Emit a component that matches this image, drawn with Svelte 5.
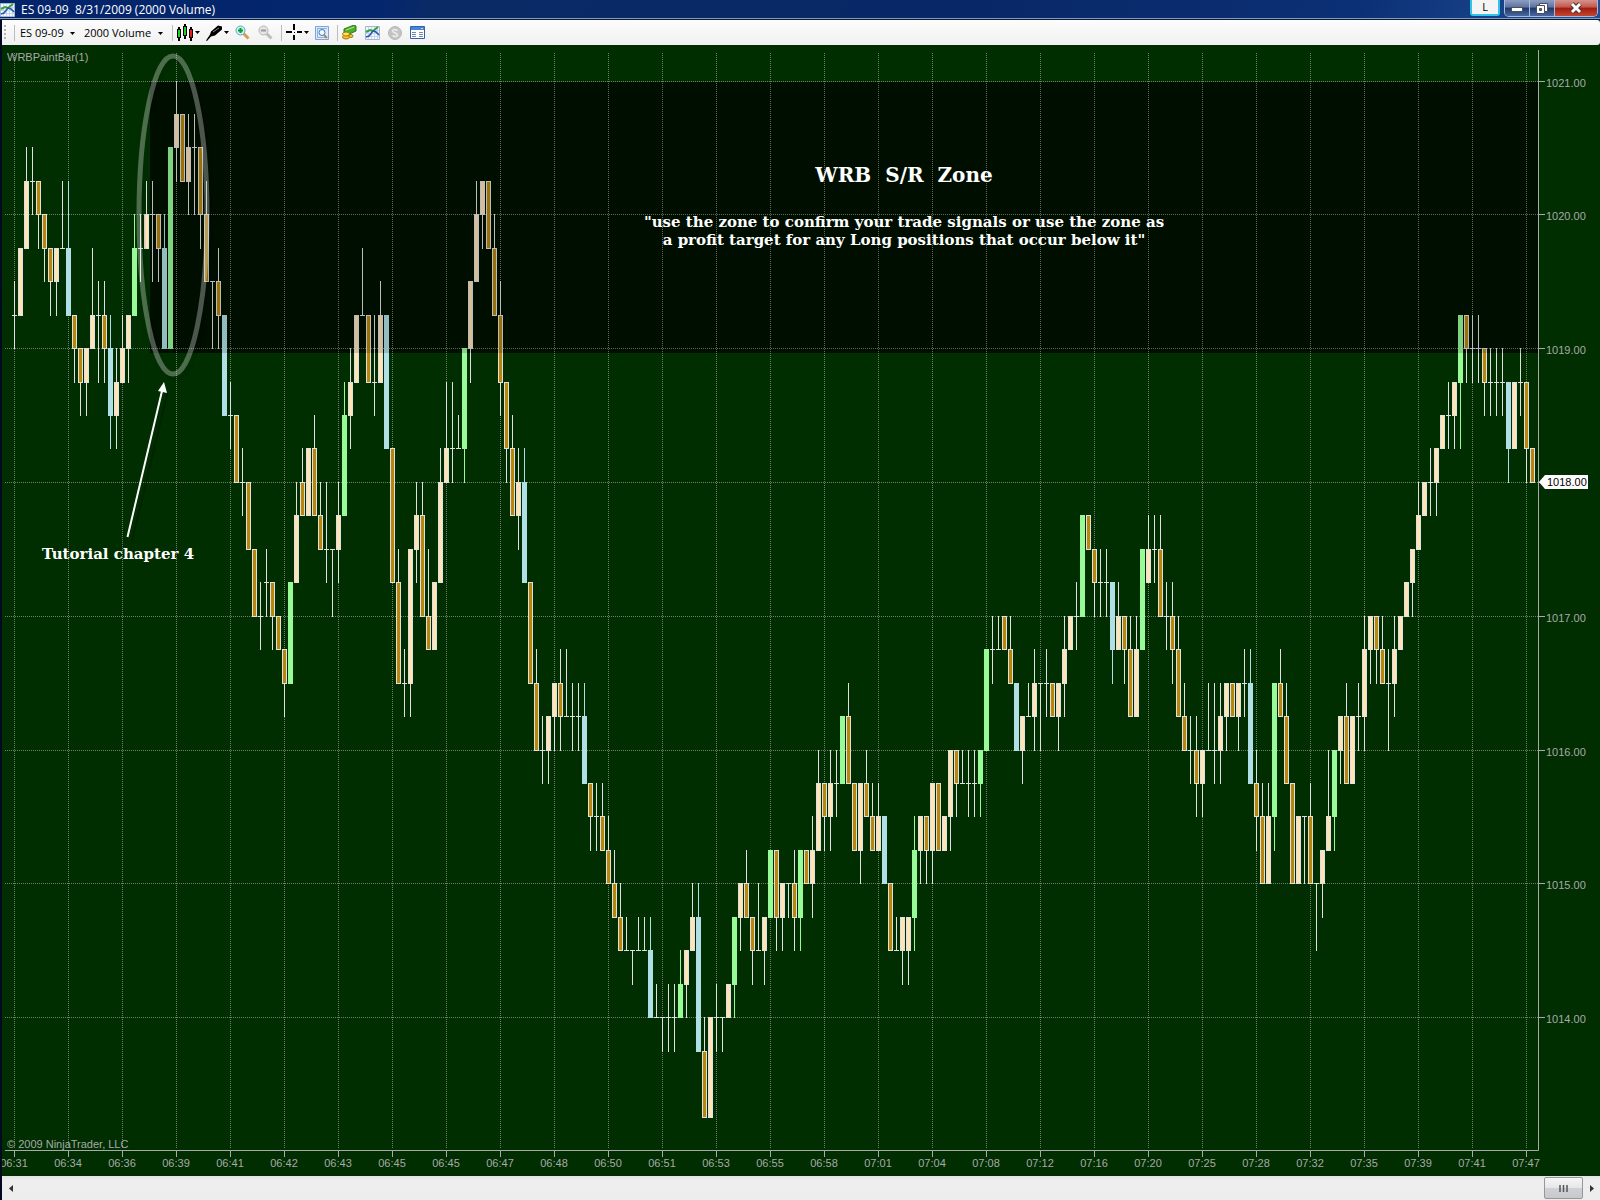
<script lang="ts">
	// kind, high, body top, body bottom, low; prices counted in ticks below 1021.00
	const bars = `
		n 6 7 7 8,u 5 5 7 7,u 2 3 5 5,n 2 3 3 4,d 3 3 4 5,d 4 4 5 6,d 5 5 6 7,u 5 5 6 7,n 3 5 5 5,
		b 3 5 7 7,d 7 7 8 9,d 8 8 9 10,u 8 8 9 10,u 5 7 8 8,n 6 7 7 9,d 6 7 8 9,b 7 8 10 11,u 8 9 10 11,
		u 7 8 9 9,u 7 7 8 9,g 4 5 7 7,n 4 5 5 6,u 3 4 5 5,n 3 4 4 6,d 4 4 5 6,b 4 5 8 8,g 2 2 8 8,
		u 0 1 2 3,d 1 1 3 3,u 1 2 3 4,n 1 2 2 4,d 2 2 4 5,d 3 4 6 6,n 6 6 6 8,d 5 6 7 8,b 7 7 10 10,
		n 9 10 10 11,d 10 10 12 12,n 11 12 12 13,d 12 12 14 14,d 14 14 16 16,n 15 16 16 17,n 14 15 15 16,d 15 15 16 17,d 16 16 17 17,
		d 17 17 18 19,g 15 15 18 18,u 12 13 15 15,d 11 12 13 13,u 11 11 13 13,d 10 11 13 13,d 12 13 14 14,n 12 14 14 15,n 14 14 14 16,
		u 12 13 14 15,g 9 10 13 13,u 8 9 10 11,u 7 7 9 9,n 5 7 7 7,d 7 7 9 9,n 7 9 9 10,u 6 7 9 9,b 7 7 11 11,
		d 11 11 15 15,d 14 15 18 18,n 17 18 18 19,u 14 14 18 19,u 12 13 14 15,d 12 13 16 16,d 14 16 17 17,u 15 15 17 17,u 11 12 15 15,
		u 9 11 12 12,n 9 11 11 12,n 10 11 11 11,g 8 8 11 12,u 6 6 8 9,u 3 4 6 6,u 3 3 4 5,d 3 3 5 5,d 4 5 7 7,
		d 6 7 9 10,d 9 9 11 12,d 10 11 13 13,u 11 12 13 14,b 11 12 15 15,d 15 15 18 18,d 17 18 20 20,n 19 20 20 21,u 19 19 20 21,
		u 18 18 19 20,d 17 18 19 20,n 17 19 19 19,n 18 19 19 20,n 18 19 19 20,b 18 19 21 21,d 21 21 22 23,n 21 22 22 23,d 21 22 23 23,
		d 22 23 24 24,d 23 24 25 25,d 24 25 26 26,n 25 26 26 26,n 26 26 26 27,n 25 26 26 26,n 25 26 26 26,b 25 26 28 28,n 27 28 28 28,
		n 28 28 28 29,n 27 28 28 29,n 27 28 28 29,g 26 27 28 28,u 26 26 27 28,u 24 25 26 26,b 24 25 29 29,d 28 29 31 31,u 28 28 31 31,
		n 27 28 28 29,n 28 28 28 29,u 27 27 28 28,g 25 25 27 28,u 24 24 25 26,d 23 24 25 25,d 25 25 26 27,n 24 26 26 26,u 25 25 26 27,
		g 23 23 25 25,d 23 23 25 26,u 24 24 25 26,n 24 24 24 25,d 23 24 25 26,g 23 23 25 26,d 23 23 24 24,u 22 23 24 25,u 20 21 23 23,
		d 21 21 22 23,u 20 21 22 23,n 20 21 21 22,g 19 19 21 21,d 18 19 21 21,d 21 21 23 23,u 21 21 23 24,d 20 21 22 22,d 21 22 23 23,
		u 21 22 23 23,b 22 22 24 24,d 24 24 26 26,n 25 26 26 26,u 25 25 26 27,u 25 25 26 27,g 22 23 25 26,u 22 22 23 24,d 22 22 23 24,
		u 21 21 23 24,d 21 21 23 23,u 22 22 23 23,u 20 20 22 23,d 20 20 21 22,n 20 21 21 21,n 20 21 21 22,n 20 21 21 22,g 20 20 21 22,
		g 17 17 20 20,n 16 17 17 18,n 16 17 17 17,d 16 16 17 17,d 16 17 18 18,b 18 18 20 20,u 19 19 20 21,n 18 19 19 19,u 17 18 19 20,
		n 18 18 18 20,n 17 18 18 19,d 18 18 19 19,u 18 18 19 20,u 16 17 18 19,u 16 16 17 17,n 15 16 16 17,g 13 13 16 16,d 13 13 14 14,
		d 14 14 15 16,n 14 15 15 16,n 14 15 15 16,b 15 15 17 18,u 15 16 17 17,d 16 16 17 18,d 16 17 19 19,u 16 17 19 19,g 14 14 17 17,
		u 13 14 15 15,n 13 14 14 15,d 13 14 16 16,n 15 16 16 17,d 15 16 17 18,d 16 17 19 19,d 18 19 20 20,n 19 20 20 21,d 19 20 21 22,
		u 20 20 21 22,n 18 20 20 20,n 18 20 20 21,u 18 19 20 21,u 18 18 19 20,d 18 18 19 19,u 18 18 19 20,n 17 18 18 19,b 17 18 21 21,
		d 20 21 22 23,d 21 22 24 24,u 21 22 24 24,g 18 18 22 23,d 17 18 19 19,d 18 19 21 21,d 21 21 24 24,u 22 22 24 24,n 22 22 22 24,
		d 21 22 24 24,n 24 24 24 26,u 23 23 24 25,u 20 22 23 23,g 20 20 22 23,u 19 19 20 21,d 18 19 21 21,u 19 19 21 21,n 18 19 19 20,
		u 16 17 19 20,u 16 16 17 18,d 16 16 17 18,d 16 17 18 18,n 17 18 18 20,u 16 17 18 19,u 16 16 17 17,u 15 15 16 16,u 14 14 15 16,
		u 12 13 14 14,u 12 12 13 13,n 11 12 12 13,u 11 11 12 13,u 10 10 11 11,n 9 10 10 11,u 9 9 10 11,g 7 7 9 11,d 7 7 8 9,
		n 7 8 8 9,n 7 8 8 9,d 8 8 9 10,n 8 9 9 10,n 8 9 9 10,n 8 9 9 10,b 9 9 11 12,u 9 9 11 11,n 8 9 9 10,
		d 9 9 11 12,d 11 11 12 12`;

	const fills: Record<string, string> = { u: '#ffe4b5', d: '#b8860b', g: '#98fb98', b: '#b0e0e6' };

	const priceY = (ticks: number) => Math.floor(81 + ticks * 33.45);

	const candles = bars.split(',').map((bar, i) => {
		const [kind, ...ticks] = bar.trim().split(' ');
		const [high, top, bottom, low] = ticks.map((t) => priceY(Number(t)));
		const wide = kind === 'g' || kind === 'b';
		return { kind, high, top, bottom, low, x: 14 + i * 6, line: wide ? fills[kind] : '#e0e0e0' };
	});

	const times = [
		'06:31', '06:34', '06:36', '06:39', '06:41', '06:42', '06:43', '06:45', '06:45', '06:47',
		'06:48', '06:50', '06:51', '06:53', '06:55', '06:58', '07:01', '07:04', '07:08', '07:12',
		'07:16', '07:20', '07:25', '07:28', '07:32', '07:35', '07:39', '07:41', '07:47'
	].map((label, i) => ({ label, x: 14 + i * 54 }));

	const prices = [1021, 1020, 1019, 1018, 1017, 1016, 1015, 1014].map((price, i) => ({
		label: price.toFixed(2),
		y: priceY(i * 4),
		last: price === 1018
	}));
</script>

{#snippet chartIcon()}
	<svg width="15" height="15" viewBox="0 0 15 15">
		<path d="M.5 1.500h14v13H.5z" fill="#f4f8ff" stroke="#a3b6d2" />
		<path d="M3.500 2v12M6.500 2v12M9.500 2v12M12.500 2v12M1 5.500h13M1 8.500h13M1 11.500h13" stroke="#c6d4ea" />
		<path d="M1 7l4-2 3 1 5-4" fill="none" stroke="#35a535" stroke-width="2" />
		<path d="M1 12l3-1 4-5 3 1 3 3" fill="none" stroke="#2b56b5" stroke-width="1.500" />
	</svg>
{/snippet}

{#snippet caret()}
	<svg class="caret" width="5" height="3" viewBox="0 0 5 3"><path d="M0 0h5L2.500 3z" fill="#000" /></svg>
{/snippet}

<div class="window">
	<header class="titlebar">
		{@render chartIcon()}
		<h1>{'ES 09-09  8/31/2009 (2000 Volume)'}</h1>
		<button class="link" aria-label="Link">L</button>
		<div class="controls">
			<button aria-label="Minimize">
				<svg width="14" height="12" viewBox="0 0 14 12"><rect x="1.500" y="5.500" width="11" height="4" fill="#fff" stroke="#4a4f60" /></svg>
			</button>
			<button aria-label="Restore">
				<svg width="14" height="13" viewBox="0 0 14 13">
					<path d="M4.500 1.500h8v8h-8z" fill="#fff" stroke="#4a4f60" />
					<path d="M1.500 3.500h8v8h-8z" fill="#fff" stroke="#4a4f60" />
					<path d="M4.500 6.500h2v2h-2z" fill="#5c6f98" stroke="#4a4f60" />
				</svg>
			</button>
			<button class="close" aria-label="Close">
				<svg width="14" height="12" viewBox="0 0 14 12">
					<path d="M3 2l8 8M11 2l-8 8" stroke="#4a3038" stroke-width="5" />
					<path d="M3 2l8 8M11 2l-8 8" stroke="#fff" stroke-width="3" />
				</svg>
			</button>
		</div>
	</header>

	<div class="frame">
		<nav class="toolbar">
			<span class="grip"></span>
			<span class="sep"></span>
			<label class="pick">
				<select aria-label="Instrument"><option>ES 09-09</option></select>
				{@render caret()}
			</label>
			<label class="pick">
				<select aria-label="Interval"><option>2000 Volume</option></select>
				{@render caret()}
			</label>
			<span class="sep"></span>
			<button class="menu" aria-label="Chart style">
				<svg width="17" height="17" viewBox="0 0 17 17">
					<path d="M2 3v14M8 0v15M14 3v14" stroke="#000" stroke-width="2" />
					<rect x=".5" y="5.500" width="3" height="8" fill="#1fd41f" stroke="#000" />
					<rect x="6.500" y="2.500" width="3" height="9" fill="#1fd41f" stroke="#000" />
					<rect x="12.500" y="5.500" width="3" height="8" fill="#f01818" stroke="#000" />
				</svg>
				{@render caret()}
			</button>
			<button class="menu" aria-label="Drawing tools">
				<svg width="17" height="16" viewBox="0 0 17 16">
					<path d="M0 15.500l4-6 1-3 7-6 4 1v3l-7 6-4 1-4 4.500z" fill="#000" />
					<path d="M7 7l6-4" stroke="#8a8a8a" />
				</svg>
				{@render caret()}
			</button>
			<button aria-label="Zoom in">
				<svg width="15" height="15" viewBox="0 0 15 15">
					<path d="M8.500 8.500l5 5" stroke="#d99a52" stroke-width="3" />
					<circle cx="5.500" cy="5.500" r="4.500" fill="#c8f2f4" stroke="#5aa9c4" />
					<path d="M5.500 3v5M3 5.500h5" stroke="#119a2a" stroke-width="2" />
				</svg>
			</button>
			<button aria-label="Zoom out" disabled>
				<svg width="15" height="15" viewBox="0 0 15 15">
					<path d="M8.500 8.500l5 5" stroke="#bdbdbd" stroke-width="3" />
					<circle cx="5.500" cy="5.500" r="4.500" fill="#e6e6e6" stroke="#b4b4b4" />
					<path d="M3 5.500h5" stroke="#9a9a9a" stroke-width="2" />
				</svg>
			</button>
			<span class="sep"></span>
			<button class="menu" aria-label="Cross hair">
				<svg width="17" height="17" viewBox="0 0 17 17">
					<path d="M0 8h6M11 8h5M8 0v6M8 11v5" stroke="#000" stroke-width="2" />
					<path d="M8 8h1v1H8z" fill="#000" />
				</svg>
				{@render caret()}
			</button>
			<button aria-label="Data box">
				<svg width="14" height="14" viewBox="0 0 14 14">
					<path d="M.5.5h13v13H.5z" fill="#dcebfb" stroke="#7fa5d4" />
					<path d="M2.500 3v9M2 2.500h10M12 11.500H2" stroke="#8db2df" />
					<circle cx="7" cy="6.500" r="3" fill="#f3faff" stroke="#3f78bd" />
					<path d="M9 9l3 3" stroke="#b9824e" stroke-width="2" />
				</svg>
			</button>
			<span class="sep"></span>
			<button aria-label="Chart trader">
				<svg width="15" height="15" viewBox="0 0 15 15">
					<path d="M2 4l10-4 2 1v5l-9 4-3-1z" fill="#4fae2c" stroke="#2c7a16" />
					<path d="M4 5l8-3" stroke="#b6e68f" />
					<ellipse cx="4" cy="12" rx="3.500" ry="2" fill="#f2c52b" stroke="#a87b09" />
					<ellipse cx="4" cy="9" rx="3.500" ry="2" fill="#ffe169" stroke="#a87b09" />
					<ellipse cx="9" cy="11" rx="2" ry="1.500" fill="#f7cf3c" stroke="#a87b09" />
				</svg>
			</button>
			<button aria-label="Indicators">{@render chartIcon()}</button>
			<button aria-label="Strategies" disabled>
				<svg width="14" height="14" viewBox="0 0 14 14">
					<circle cx="7" cy="7" r="6.500" fill="#c4c4c4" stroke="#b8b8b8" />
					<path d="M9.500 4.500q-5-2-5 .5c0 2 5 1.500 5 4q0 2.500-5 .5" fill="none" stroke="#eee" stroke-width="1.500" />
				</svg>
			</button>
			<button aria-label="Properties">
				<svg width="15" height="13" viewBox="0 0 15 13">
					<path d="M.5.5h14v12H.5z" fill="#fff" stroke="#2d62b0" />
					<path d="M1 1h13v3H1z" fill="#4585dc" />
					<path d="M2 6.500h4M2 8.500h4M2 10.500h4M9 6.500h4M9 8.500h4M9 10.500h4" stroke="#7488a5" />
					<path d="M11 2.500h2" stroke="#ffd257" />
				</svg>
			</button>
		</nav>

		<main>
			<svg class="chart" viewBox="2 45 1598 1131" role="img" aria-label="ES 09-09 price chart">
				<rect x="150" y="82" width="1388" height="271" fill="#001100" />

				<g class="grid">
					{#each prices as price}
						<path d="M5 {price.y}.5H1538" />
					{/each}
					{#each times as time}
						<path d="M{time.x}.5 53V1148" />
					{/each}
				</g>

				<g shape-rendering="crispEdges">
					{#each candles as c}
						<rect x={c.x} y={c.high} width="1" height={c.low - c.high + 1} fill={c.line} />
						<rect x={c.x - 2} y={c.top} width="5" height={c.bottom - c.top + 1} fill={c.line} />
						{#if c.kind === 'u' || c.kind === 'd'}
							<rect x={c.x - 1} y={c.top + 1} width="3" height={c.bottom - c.top - 1} fill={fills[c.kind]} />
						{/if}
					{/each}
					<rect x="150" y="82" width="1388" height="271" fill="#000" opacity=".16" />
				</g>

				<g class="axis">
					<path d="M5 1150.500H1538.500V50" />
					{#each times as time}
						<path d="M{time.x}.5 1151v6" />
					{/each}
					{#each prices as price}
						<path d="M1539 {price.y}.5h6" />
					{/each}
				</g>

				<g class="label">
					<text x="7" y="61">WRBPaintBar(1)</text>
					<text x="7" y="1148">© 2009 NinjaTrader, LLC</text>
					{#each times as time}
						<text x={time.x} y="1167" text-anchor="middle">{time.label}</text>
					{/each}
					{#each prices as price}
						{#if price.last}
							<path d="M1539 {price.y}l6-7h43v14h-43z" fill="#fff" />
						{/if}
						<text class:last={price.last} x={price.last ? 1547 : 1546} y={price.y + (price.last ? 4 : 6)}>{price.label}</text>
					{/each}
				</g>

				<ellipse cx="177" cy="220" rx="34" ry="159" fill="none" stroke="#000" stroke-width="5" opacity=".08" />
				<ellipse cx="173" cy="215" rx="34" ry="159" fill="none" stroke="#fff" stroke-width="5" opacity=".3" />
				<path d="M132 541L168 391" stroke="#000" stroke-width="2" opacity=".2" />
				<path d="M127.500 537L162 391" stroke="#fff" stroke-width="2" />
				<path d="M164 382l3 11-9-2z" fill="#fff" />

				<g class="note" text-anchor="middle">
					<text class="heading" x="904" y="182">{'WRB  S/R  Zone'}</text>
					<text x="904" y="227">"use the zone to confirm your trade signals or use the zone as</text>
					<text x="904" y="245">a profit target for any Long positions that occur below it"</text>
					<text x="118" y="559">Tutorial chapter 4</text>
				</g>
			</svg>
		</main>

		<footer class="scrollbar">
			<button aria-label="Scroll left">
				<svg width="4" height="7" viewBox="0 0 4 7"><path d="M4 0v7L0 3.500z" fill="#333" /></svg>
			</button>
			<button class="thumb" aria-label="Scroll position">
				<svg width="9" height="7" viewBox="0 0 9 7"><path d="M1 0v7M4.500 0v7M8 0v7" stroke="#555" stroke-width="1.500" /></svg>
			</button>
			<button aria-label="Scroll right">
				<svg width="4" height="7" viewBox="0 0 4 7"><path d="M0 0v7l4-3.500z" fill="#333" /></svg>
			</button>
		</footer>
	</div>
</div>

<style>
	:global(body) {
		background-color: #002e00;
	}

	.window {
		font-family: 'Segoe UI', 'Open Sans', 'Noto Sans', sans-serif;
		font-size: 11px;
		color: #000;
	}

	button,
	select {
		border: 0;
		padding: 0;
		background: none;
		font: inherit;
		color: inherit;
	}

	svg {
		display: block;
		flex: none;
	}

	.titlebar {
		display: flex;
		align-items: flex-start;
		box-sizing: border-box;
		height: 20px;
		background: linear-gradient(105deg, #03246b 0%, #04266c 24%, #0a2a66 27%, #082766 60%, #0c3075 85%, #1e4f98 100%);
		border-bottom: 1px solid #10182c;
		box-shadow: inset 0 -1px 0 #7f9cc8;
	}

	.titlebar > svg {
		margin-top: 2px;
	}

	h1 {
		flex: 1;
		margin: 0 0 0 6px;
		font-size: 12px;
		font-weight: 400;
		line-height: 19px;
		color: #fff;
		white-space: pre;
	}

	.link {
		box-sizing: border-box;
		width: 30px;
		height: 16px;
		margin-right: 4px;
		border: 2px solid #31c3e8;
		border-top: 0;
		border-radius: 0 0 3px 3px;
		background-color: #f4f4f4;
		line-height: 14px;
	}

	.controls {
		display: flex;
		height: 16px;
		margin-right: 2px;
		border: 1px solid #a9bbdb;
		border-top: 0;
		border-radius: 0 0 5px 5px;
		overflow: hidden;
	}

	.controls button {
		display: flex;
		align-items: center;
		justify-content: center;
		width: 25px;
		border-right: 1px solid #a9bbdb;
		background: linear-gradient(#8d9ec2, #5d729f 45%, #1c3769 50%, #4a68a0);
	}

	.controls .close {
		width: 42px;
		border-right: 0;
		background: linear-gradient(#d5948c, #c1574c 45%, #9e1c10 50%, #c5462f);
	}

	.frame {
		border-left: 2px solid #020a22;
	}

	.toolbar {
		display: flex;
		align-items: center;
		height: 25px;
		padding-left: 2px;
		background: linear-gradient(#fdfdfd, #f0f0f0);
		border-radius: 0 3px 3px 0;
	}

	.toolbar button {
		margin-right: 8px;
	}

	.toolbar .menu {
		display: flex;
		align-items: center;
		gap: 1px;
		margin-right: 6px;
	}

	.grip {
		width: 2px;
		height: 16px;
		background: repeating-linear-gradient(#b4b4b4 0 2px, transparent 2px 4px);
	}

	.sep {
		width: 1px;
		height: 16px;
		margin-right: 4px;
		background-color: #bdbdbd;
	}

	.grip + .sep {
		margin: 0 5px 0 8px;
	}

	.pick {
		position: relative;
		margin-right: 9px;
	}

	.pick select {
		appearance: none;
		padding-right: 11px;
		line-height: 16px;
	}

	.pick .caret {
		position: absolute;
		right: 0;
		top: 7px;
		pointer-events: none;
	}

	.chart {
		width: 100%;
		height: auto;
		background-color: #002e00;
	}

	.grid path {
		stroke: #6f806f;
		stroke-dasharray: 1 1;
	}

	.axis path {
		fill: none;
		stroke: #a9a9a9;
	}

	.label text {
		font-family: 'Liberation Sans', Arial, sans-serif;
		font-size: 11px;
		fill: #a9a9a9;
	}

	.label .last {
		fill: #000;
	}

	.note text {
		font-family: Georgia, 'DejaVu Serif', serif;
		font-size: 15px;
		font-weight: 700;
		fill: #fff;
		white-space: pre;
	}

	.note .heading {
		font-size: 20px;
	}

	.scrollbar {
		display: flex;
		align-items: center;
		height: 24px;
		background: linear-gradient(#e4e4e4, #eee 20%, #ececec);
	}

	.scrollbar button {
		display: flex;
		align-items: center;
		justify-content: center;
		width: 17px;
		height: 22px;
	}

	.scrollbar .thumb {
		box-sizing: border-box;
		width: 39px;
		margin-left: auto;
		border: 1px solid #979797;
		border-radius: 2px;
		background: linear-gradient(#f5f5f5, #e6e6e8 50%, #d0d1d4 50%, #c8c9cc);
	}
</style>
